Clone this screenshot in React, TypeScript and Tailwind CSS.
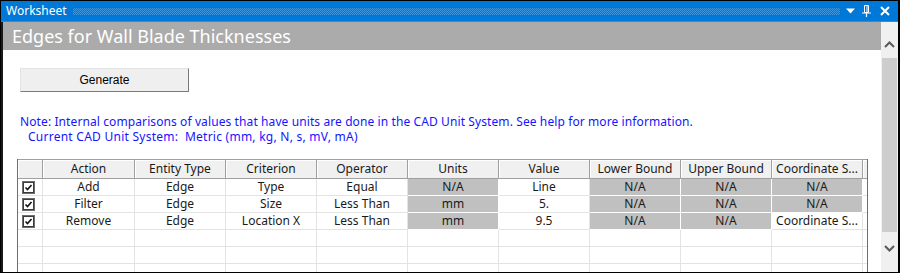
import React from 'react'

const cols = [25, 92, 91, 91, 91, 91, 91, 91, 91, 91, 4]
const headers = ['', 'Action', 'Entity Type', 'Criterion', 'Operator', 'Units', 'Value', 'Lower Bound', 'Upper Bound', 'Coordinate S...', '']

type Cell = { text: string; gray?: boolean }

const rows: Cell[][] = [
  [
    { text: 'Add' },
    { text: 'Edge' },
    { text: 'Type' },
    { text: 'Equal' },
    { text: 'N/A', gray: true },
    { text: 'Line' },
    { text: 'N/A', gray: true },
    { text: 'N/A', gray: true },
    { text: 'N/A', gray: true },
  ],
  [
    { text: 'Filter' },
    { text: 'Edge' },
    { text: 'Size' },
    { text: 'Less Than' },
    { text: 'mm', gray: true },
    { text: '5.' },
    { text: 'N/A', gray: true },
    { text: 'N/A', gray: true },
    { text: 'N/A', gray: true },
  ],
  [
    { text: 'Remove' },
    { text: 'Edge' },
    { text: 'Location X' },
    { text: 'Less Than' },
    { text: 'mm', gray: true },
    { text: '9.5' },
    { text: 'N/A', gray: true },
    { text: 'N/A', gray: true },
    { text: 'Coordinate S...' },
  ],
]

const CheckBox = () => (
  <svg width="13" height="13" viewBox="0 0 13 13">
    <rect x="0.5" y="0.5" width="12" height="12" fill="#fff" stroke="#6d6d6d" />
    <rect x="1.5" y="1.5" width="10" height="10" fill="none" stroke="#3c3c3c" />
    <path d="M3.5 6.5 L5.5 8.5 L9.5 4" fill="none" stroke="#111" strokeWidth="1.6" />
  </svg>
)

const Chevron = ({ up }: { up?: boolean }) => (
  <svg width="11" height="7" viewBox="0 0 11 7">
    <path
      d={up ? 'M1 6 L5.5 1.5 L10 6' : 'M1 1 L5.5 5.5 L10 1'}
      fill="none"
      stroke="#5a5a5a"
      strokeWidth="2"
    />
  </svg>
)

export default function App() {
  return (
    <div className="w-[901px] h-[275px] bg-white font-['Noto_Sans',sans-serif]">
      <div className="w-[900px] h-[273px] border-l border-t border-b border-r-2 border-black flex flex-col">
        {/* Title bar */}
        <div className="h-[21px] shrink-0 bg-[#0078d7] border-b border-[#7a7a7a] flex items-center pl-[5px] pr-[8px]">
          <span className="text-white text-[12px] leading-none">Worksheet</span>
          <div className="flex-1 h-[7px] mx-[6px] bg-[conic-gradient(#3d95dd_25%,transparent_0_50%,#3d95dd_0_75%,transparent_0)] bg-[length:2px_2px]" />
          <div className="flex items-center gap-[7px]">
            <svg width="9" height="6" viewBox="0 0 9 6">
              <path d="M0 0.5 H9 L4.5 5.5 Z" fill="#fff" />
            </svg>
            <svg width="9" height="12" viewBox="0 0 9 12">
              <path d="M2.5 0.5 H6.5 V7.5 H2.5 Z M5 1 V7" fill="none" stroke="#fff" />
              <path d="M0 8 H9 M4.5 8 V12" stroke="#fff" strokeWidth="1.2" />
            </svg>
            <svg width="10" height="10" viewBox="0 0 10 10" className="ml-[2px]">
              <path d="M1 1 L9 9 M9 1 L1 9" stroke="#fff" strokeWidth="2" />
            </svg>
          </div>
        </div>

        {/* Body */}
        <div className="flex flex-1 min-h-0">
          <div className="flex-1 min-w-0 border-l-2 border-[#1a1a1a] flex flex-col overflow-hidden">
            <div className="h-[28px] shrink-0 bg-[#ababab] pl-[9px] flex items-center">
              <span className="text-white text-[18px] leading-none">Edges for Wall Blade Thicknesses</span>
            </div>

            <div className="pl-[17px] pt-[16px]">
              <button className="w-[169px] h-[24px] bg-[#efefef] border border-t-[#e3e3e3] border-l-[#e3e3e3] border-r-[#7a7a7a] border-b-[#7a7a7a] text-[12px] text-black font-['Liberation_Sans',Arial,sans-serif]">
                Generate
              </button>
            </div>

            <div className="mt-[22px] pl-[17px] text-[12px] leading-[15px] text-[#1414ff] tracking-[0.1px]">
              <p>Note: Internal comparisons of values that have units are done in the CAD Unit System. See help for more information.</p>
              <p className="pl-[8px] tracking-[0.25px]">Current CAD Unit System:&nbsp; Metric (mm, kg, N, s, mV, mA)</p>
            </div>

            {/* Grid */}
            <div className="mt-[15px] ml-[14px] w-fit border-l border-r border-[#6e6e6e] text-[12px] text-[#1a1a1a] flex-1">
              <div className="flex border-t border-b border-[#a0a0a0] bg-[#f0f0f0]">
                {headers.map((h, i) => (
                  <div
                    key={i}
                    style={{ width: cols[i] }}
                    className="h-[18px] shrink-0 border-r border-[#a0a0a0] last:border-r-0 shadow-[inset_1px_1px_0_#fff] flex items-center justify-center leading-none whitespace-nowrap overflow-hidden"
                  >
                    {h}
                  </div>
                ))}
              </div>

              {rows.map((r, ri) => (
                <div key={ri} className="flex">
                  <div className="w-[25px] h-[17px] shrink-0 border-r border-b border-[#e3e3e3] flex items-center pl-[4px]">
                    <CheckBox />
                  </div>
                  {r.map((c, ci) => (
                    <div
                      key={ci}
                      style={{ width: cols[ci + 1] }}
                      className={
                        c.gray
                          ? 'h-[17px] shrink-0 bg-[#c0c0c0] border-r border-b border-white flex items-center justify-center leading-none whitespace-nowrap'
                          : 'h-[17px] shrink-0 border-r border-b border-[#e3e3e3] flex items-center justify-center leading-none whitespace-nowrap'
                      }
                    >
                      {c.text}
                    </div>
                  ))}
                  <div className="w-[4px] h-[17px] shrink-0 border-b border-[#e3e3e3]" />
                </div>
              ))}

              {[0, 1, 2].map((ri) => (
                <div key={'e' + ri} className="flex">
                  {cols.map((w, ci) => (
                    <div
                      key={ci}
                      style={{ width: w }}
                      className="h-[17px] shrink-0 border-r border-b border-[#e3e3e3] last:border-r-0"
                    />
                  ))}
                </div>
              ))}
            </div>
          </div>

          {/* Scrollbar */}
          <div className="w-[17px] shrink-0 bg-[#f0f0f0] flex flex-col">
            <div className="h-[36px] flex items-end justify-center pb-[10px]">
              <Chevron up />
            </div>
            <div className="h-[174px] bg-[#cdcdcd] mx-px" />
            <div className="h-[27px] flex items-center justify-center pt-[6px]">
              <Chevron />
            </div>
          </div>
        </div>
      </div>
    </div>
  )
}
